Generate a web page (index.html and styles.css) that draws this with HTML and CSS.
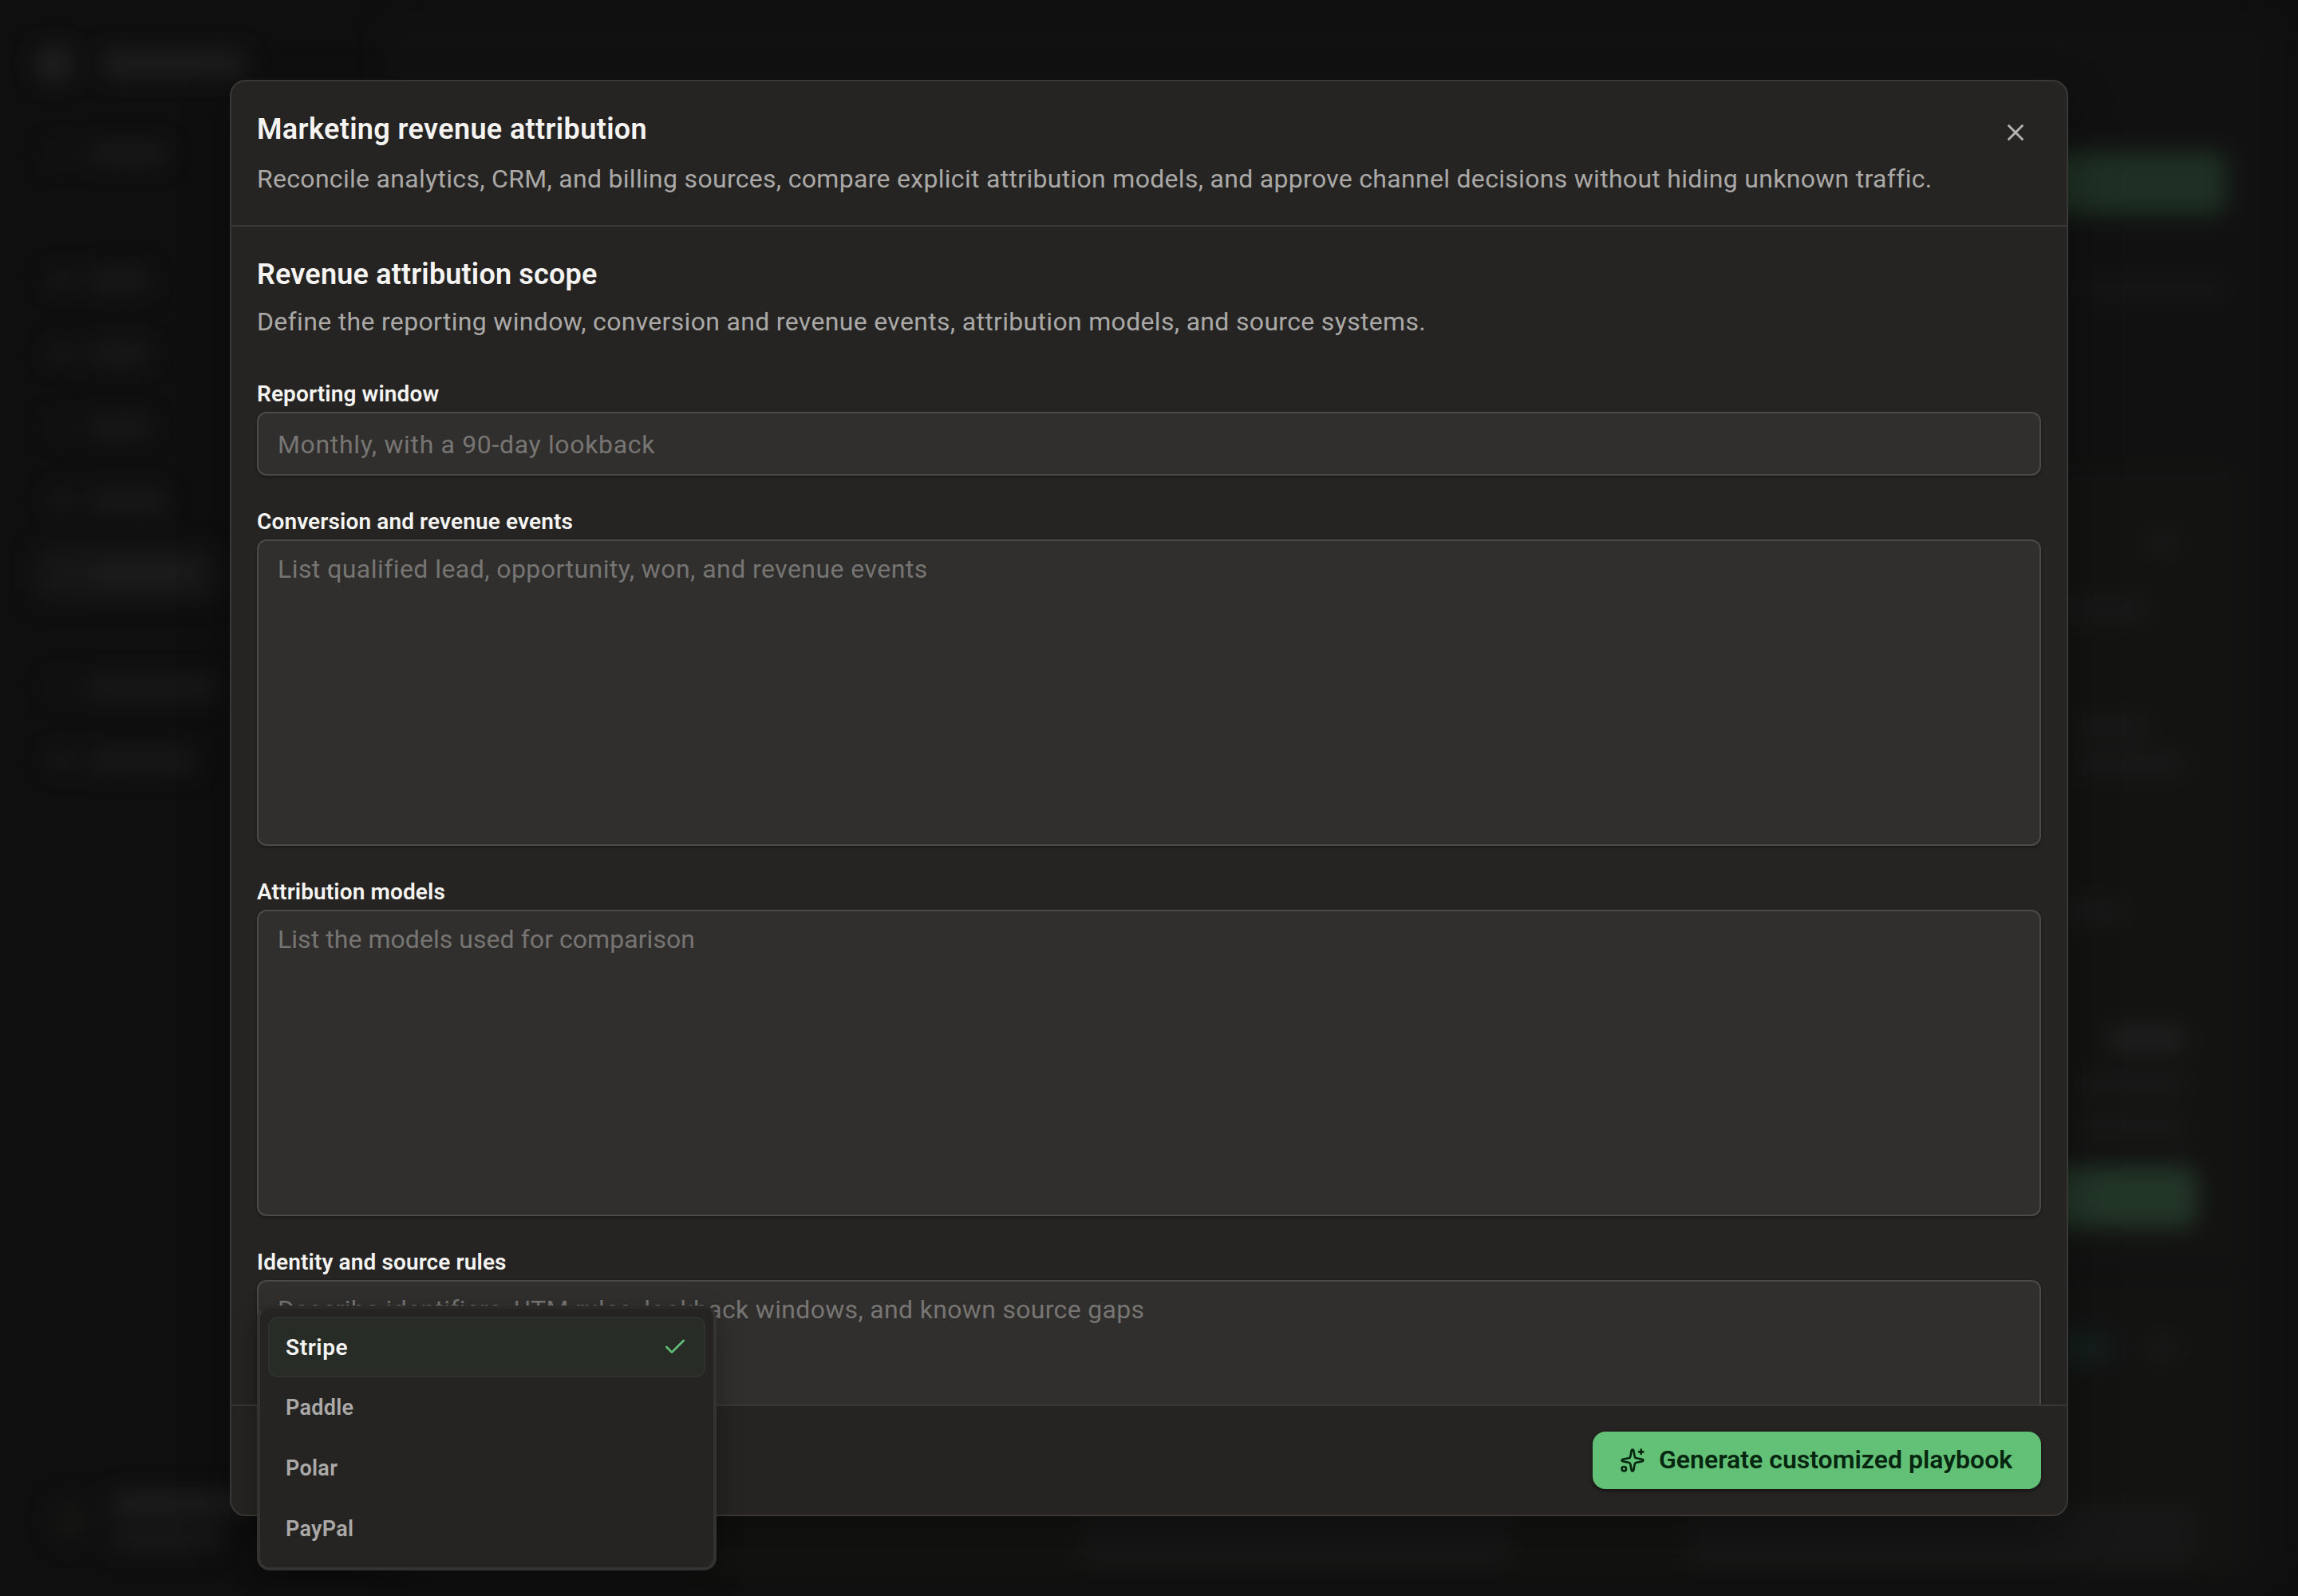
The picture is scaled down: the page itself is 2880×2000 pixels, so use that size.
FILE: index.html
```
<!DOCTYPE html>
<html lang="en">

<head>
    <meta charset="UTF-8">
    <meta name="viewport" content="width=device-width, initial-scale=1.0">
    <title>Marketing revenue attribution</title>
    <link rel="stylesheet" href="styles.css">
</head>

<body>
    <!-- dimmed app behind the dialog -->
    <div class="app" aria-hidden="true">
        <aside class="sidebar">
            <div class="brand"><i class="logo"></i><i class="bar w-brand"></i></div>
            <div class="nav-item nav-first"><i class="icon dim"></i><i class="bar w-m"></i></div>
            <div class="nav-item"><i class="icon"></i><i class="bar w-s"></i></div>
            <div class="nav-item"><i class="icon"></i><i class="bar w-s"></i></div>
            <div class="nav-item"><i class="icon dim"></i><i class="bar w-s"></i></div>
            <div class="nav-item"><i class="icon"></i><i class="bar w-m"></i></div>
            <div class="nav-item active"><i class="icon"></i><i class="bar w-l"></i></div>
            <div class="nav-item nav-last"><i class="icon dim"></i><i class="bar w-xl"></i></div>
            <div class="nav-item"><i class="icon"></i><i class="bar w-l"></i></div>
            <div class="user">
                <i class="avatar"></i>
                <div class="user-text"><i class="bar w-user bright"></i><i class="bar w-l"></i></div>
            </div>
        </aside>
        <main class="page">
            <i class="action"></i>
            <i class="bar note"></i>
            <section class="panel">
                <i class="bar p-dot"></i>
                <i class="bar p-line1"></i>
                <i class="bar p-line2"></i>
                <i class="bar p-line3"></i>
                <i class="bar p-line4"></i>
                <i class="bar p-total bright"></i>
                <i class="bar p-sum"></i>
                <i class="bar p-sum"></i>
                <i class="action small"></i>
            </section>
            <section class="panel second">
                <div class="tags"><i class="tag"></i><i class="bar dot"></i></div>
                <div class="columns">
                    <div class="col"><i class="bar"></i><i class="bar"></i></div>
                    <div class="col wide"><i class="bar"></i><i class="bar"></i></div>
                </div>
            </section>
        </main>
    </div>

    <div class="overlay">
        <div class="dialog" role="dialog">
            <header class="dialog-header">
                <div>
                    <h1 class="dialog-title">Marketing revenue attribution</h1>
                    <p class="dialog-description">Reconcile analytics, CRM, and billing sources, compare explicit attribution models, and approve channel decisions without hiding unknown traffic.</p>
                </div>
                <button type="button" class="close-button" aria-label="Close">
                    <svg viewBox="0 0 24 24"><path d="M18 6 6 18M6 6l12 12"/></svg>
                </button>
            </header>

            <div class="dialog-body">
                <h2 class="section-title">Revenue attribution scope</h2>
                <p class="section-description">Define the reporting window, conversion and revenue events, attribution models, and source systems.</p>

                <div class="form-group">
                    <label for="window">Reporting window</label>
                    <input type="text" id="window" placeholder="Monthly, with a 90-day lookback">
                </div>
                <div class="form-group">
                    <label for="events">Conversion and revenue events</label>
                    <textarea id="events" placeholder="List qualified lead, opportunity, won, and revenue events"></textarea>
                </div>
                <div class="form-group">
                    <label for="models">Attribution models</label>
                    <textarea id="models" placeholder="List the models used for comparison"></textarea>
                </div>
                <div class="form-group">
                    <label for="rules">Identity and source rules</label>
                    <textarea id="rules" placeholder="Describe identifiers, UTM rules, lookback windows, and known source gaps"></textarea>
                </div>
            </div>

            <footer class="dialog-footer">
                <button type="button" class="submit-button">
                    <svg viewBox="0 0 24 24"><path d="M11.017 2.814a1 1 0 0 1 1.966 0l1.051 5.558a2 2 0 0 0 1.594 1.594l5.558 1.051a1 1 0 0 1 0 1.966l-5.558 1.051a2 2 0 0 0-1.594 1.594l-1.051 5.558a1 1 0 0 1-1.966 0l-1.051-5.558a2 2 0 0 0-1.594-1.594l-5.558-1.051a1 1 0 0 1 0-1.966l5.558-1.051a2 2 0 0 0 1.594-1.594zM20 2v4M22 4h-4"/><circle cx="4" cy="20" r="2"/></svg>
                    <span>Generate customized playbook</span>
                </button>
            </footer>
        </div>
    </div>

    <div class="select-menu" role="listbox">
        <div class="option selected" role="option">
            <span>Stripe</span>
            <svg viewBox="0 0 24 24"><path d="M20 6 9 17l-5-5"/></svg>
        </div>
        <div class="option" role="option"><span>Paddle</span></div>
        <div class="option" role="option"><span>Polar</span></div>
        <div class="option" role="option"><span>PayPal</span></div>
    </div>
</body>

</html>
```

FILE: styles.css
```
* {
    box-sizing: border-box;
}

body {
    margin: 0;
    height: 2000px;
    overflow: hidden;
    position: relative;
    background-color: #0f0f0f;
    color: #f5f4f2;
    font-family: Roboto, "Liberation Sans", sans-serif;
    font-size: 32px;
}

h1, h2, p {
    margin: 0;
}

svg {
    display: block;
    fill: none;
    stroke: currentColor;
    stroke-width: 2;
    stroke-linecap: round;
    stroke-linejoin: round;
}

/* app in the background */
.app {
    display: flex;
    height: 2000px;
    filter: blur(14px);
}

.app i {
    display: block;
}

.bar {
    height: 28px;
    border-radius: 8px;
    background-color: #191919;
}

.bar.bright {
    background-color: #1e1e1e;
}

.sidebar {
    width: 480px;
    padding: 48px 0 0 44px;
    display: flex;
    flex-direction: column;
}

.brand {
    display: flex;
    align-items: center;
    gap: 36px;
    height: 64px;
}

.logo {
    width: 48px;
    height: 48px;
    border-radius: 50%;
    background-color: #1f1f1f;
}

.brand .bar {
    height: 32px;
    background-color: #1e1e1e;
}

.w-brand { width: 180px; }
.w-s { width: 76px; }
.w-m { width: 96px; }
.w-l { width: 134px; }
.w-xl { width: 200px; }
.w-user { width: 170px; }

.nav-item {
    display: flex;
    align-items: center;
    gap: 18px;
    width: 232px;
    height: 68px;
    padding-left: 18px;
    margin-bottom: 24px;
    border-radius: 14px;
}

.nav-item .icon {
    width: 32px;
    height: 24px;
    border-radius: 8px;
    background-color: #181818;
}

.nav-item .icon.dim {
    background-color: #131313;
}

.nav-first {
    margin-top: 47px;
    margin-bottom: 90px;
}

.nav-item.active {
    background-color: #151615;
}

.nav-item.active .bar {
    background-color: #1c1c1c;
}

.nav-last {
    margin-top: 50px;
}

.user {
    display: flex;
    align-items: center;
    gap: 28px;
    margin-top: auto;
    margin-bottom: 58px;
    padding-left: 20px;
}

.avatar {
    width: 48px;
    height: 56px;
    border-radius: 50%;
    background-color: #141413;
}

.user-text {
    display: grid;
    gap: 16px;
}

.page {
    flex: 1;
    margin: 24px 24px 24px 0;
    padding: 166px 66px 0 40px;
    border-radius: 24px;
    background-color: #111111;
    display: flex;
    flex-direction: column;
    align-items: flex-end;
}

.action {
    width: 420px;
    height: 78px;
    border-radius: 14px;
    background-color: #1e3023;
}

.note {
    width: 180px;
    margin-top: 80px;
    background-color: #151515;
}

.panel {
    width: calc(100% + 20px);
    height: 1000px;
    margin-top: 212px;
    margin-right: -20px;
    padding: 78px 58px 0;
    border-radius: 20px;
    background-color: #131312;
    display: flex;
    flex-direction: column;
    align-items: flex-end;
}

.p-dot { width: 36px; margin-right: 24px; }
.p-line1 { width: 120px; margin: 56px 60px 0 0; }
.p-line2 { width: 90px; margin: 120px 60px 0 0; }
.p-line3 { width: 140px; margin: 18px 12px 0 0; }
.p-line4 { width: 90px; margin: 156px 90px 0 0; }
.p-total { width: 100px; height: 32px; margin: 130px 12px 0 0; }
.p-sum { width: 140px; height: 26px; margin: 28px 12px 0 0; }

.action.small {
    height: 76px;
    margin-top: 36px;
    background-color: #223627;
}

.panel.second {
    height: 372px;
    margin-top: 20px;
    padding-top: 66px;
}

.tags {
    display: flex;
    align-items: center;
    gap: 44px;
    margin-right: 24px;
}

.tag {
    width: 90px;
    height: 36px;
    border-radius: 18px;
    background-color: #14201d;
}

.tags .dot {
    width: 36px;
}

.columns {
    display: flex;
    gap: 220px;
    margin-top: 184px;
}

.col {
    display: grid;
    gap: 12px;
    width: 540px;
}

.col.wide {
    width: 640px;
}

.col .bar {
    background-color: #191919;
}

/* dialog */
.overlay {
    position: absolute;
    inset: 0;
    display: flex;
    align-items: center;
    justify-content: center;
}

.dialog {
    width: 2304px;
    height: 1800px;
    border: 2px solid #393836;
    border-radius: 20px;
    background-color: #252422;
    box-shadow: 0 24px 60px rgba(0, 0, 0, 0.35);
    display: flex;
    flex-direction: column;
    overflow: hidden;
}

.dialog-header {
    height: 182px;
    padding: 32px 32px 0;
    border-bottom: 2px solid #383735;
    display: flex;
    justify-content: space-between;
    flex-shrink: 0;
}

.dialog-title {
    font-size: 36px;
    line-height: 56px;
    font-weight: 600;
    letter-spacing: 0.37px;
}

.dialog-description {
    margin-top: 8px;
    line-height: 52px;
    letter-spacing: 0.3px;
    color: #aaa9a7;
    white-space: nowrap;
}

.close-button {
    width: 64px;
    height: 64px;
    padding: 0;
    border: none;
    background: none;
    color: #b5b4b2;
    display: grid;
    place-items: center;
}

.close-button svg {
    width: 34px;
    height: 34px;
}

.dialog-body {
    flex: 1;
    min-height: 0;
    padding: 34px 32px 0;
    overflow: hidden;
}

.section-title {
    font-size: 36px;
    line-height: 52px;
    font-weight: 600;
    letter-spacing: 0.18px;
}

.section-description {
    margin: 7px 0 45px;
    line-height: 52px;
    letter-spacing: 0.32px;
    color: #aaa9a7;
}

.form-group {
    margin-bottom: 38px;
}

.form-group label {
    display: block;
    margin-bottom: 2px;
    font-size: 28px;
    line-height: 40px;
    font-weight: 600;
    letter-spacing: 0.12px;
}

.form-group input,
.form-group textarea {
    display: block;
    width: 100%;
    height: 80px;
    padding: 0 24px;
    border: 2px solid #4b4a48;
    border-radius: 12px;
    background-color: #302f2d;
    box-shadow: 0 2px 4px rgba(0, 0, 0, 0.3);
    color: #f5f4f2;
    font-family: inherit;
    font-size: 32px;
    line-height: 48px;
    letter-spacing: 0.32px;
    outline: none;
}

.form-group textarea {
    height: 384px;
    padding-top: 11px;
    resize: none;
}

#window {
    padding-top: 2px;
    letter-spacing: 0.66px;
}

#events {
    letter-spacing: 0.44px;
}

#models {
    letter-spacing: 0.05px;
}

.form-group input::placeholder,
.form-group textarea::placeholder {
    color: #777573;
}

.dialog-footer {
    height: 138px;
    padding: 32px 32px 0;
    border-top: 2px solid #383735;
    display: flex;
    justify-content: flex-end;
    flex-shrink: 0;
}

.submit-button {
    width: 562px;
    height: 72px;
    padding: 0 0 0 34px;
    border: none;
    border-radius: 16px;
    background-color: #62c077;
    box-shadow: 0 2px 5px rgba(0, 0, 0, 0.5);
    color: #06260f;
    font-family: inherit;
    font-size: 32px;
    font-weight: 600;
    display: flex;
    align-items: center;
    gap: 17px;
    white-space: nowrap;
}

.submit-button svg {
    width: 32px;
    height: 32px;
}

.submit-button span {
    padding-bottom: 2px;
}

/* select menu */
.select-menu {
    position: absolute;
    left: 322px;
    top: 1636px;
    width: 576px;
    height: 332px;
    padding: 10px;
    border: 4px solid #343331;
    border-top-color: #2a2927;
    border-radius: 16px;
    background-color: #252422;
    box-shadow: 0 12px 32px rgba(0, 0, 0, 0.3);
}

.option {
    display: flex;
    align-items: center;
    justify-content: space-between;
    height: 76px;
    padding: 0 20px;
    border: 2px solid transparent;
    border-radius: 12px;
    color: #aaa9a7;
    font-size: 27px;
    font-weight: 600;
    letter-spacing: 0.3px;
}

.option.selected {
    border-color: #2e322d;
    background-color: #272c26;
    color: #f5f4f2;
    font-size: 28px;
    letter-spacing: 0.6px;
}

.option svg {
    width: 32px;
    height: 32px;
    color: #62c077;
}
```
